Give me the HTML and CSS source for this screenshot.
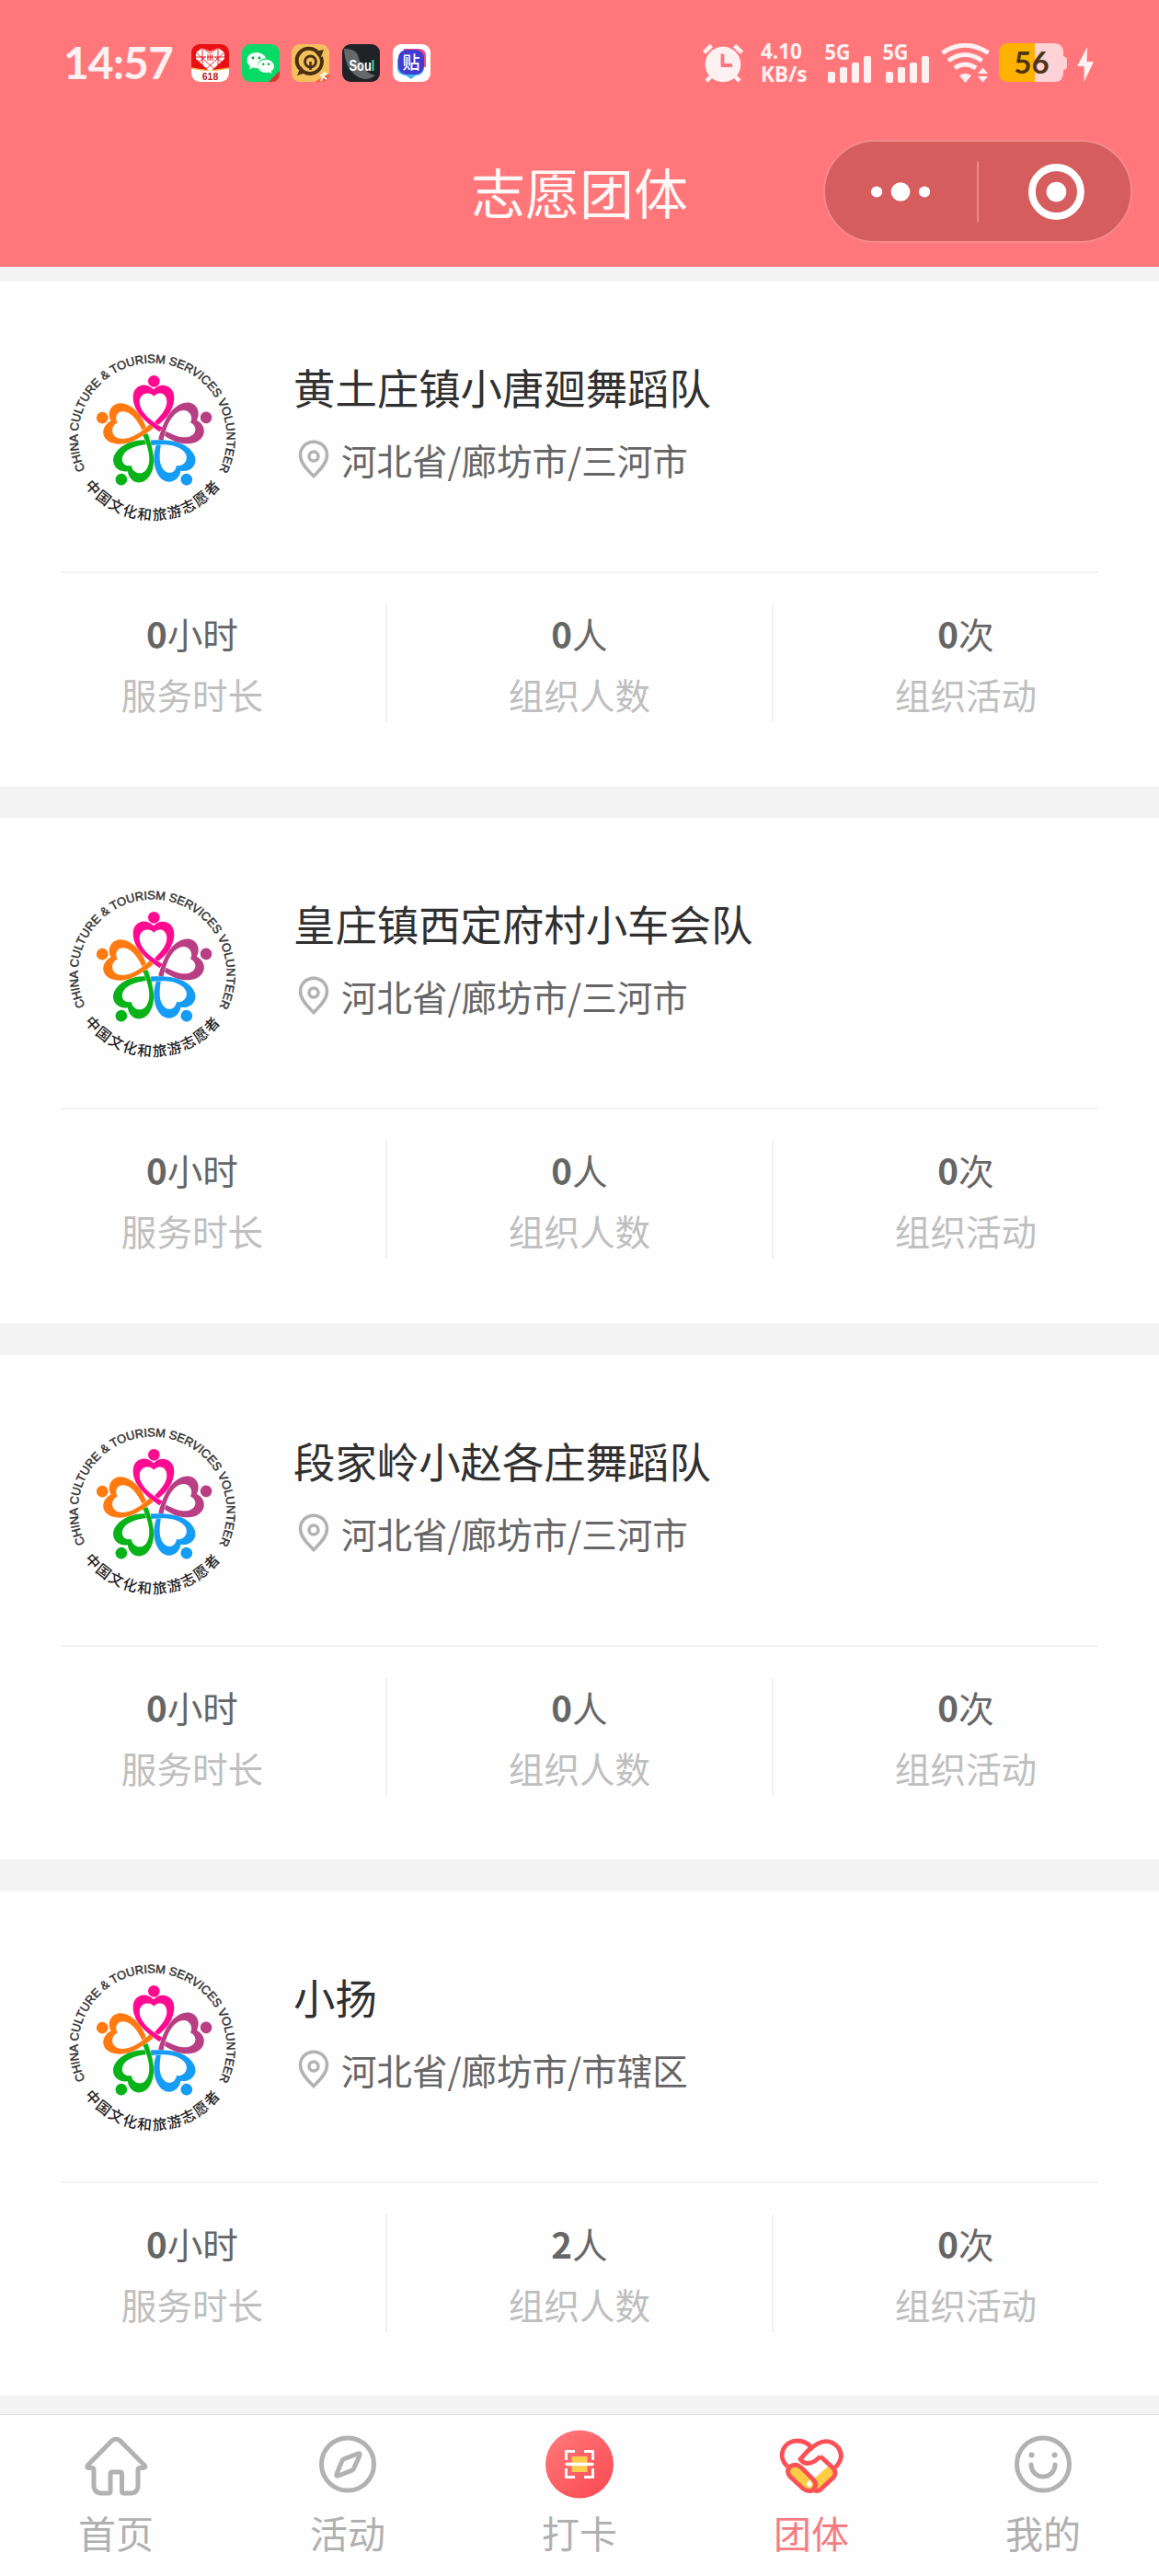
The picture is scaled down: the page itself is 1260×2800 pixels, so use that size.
FILE: index.html
```html
<!DOCTYPE html>
<html lang="zh-CN">
<head>
<meta charset="utf-8">
<title>志愿团体</title>
<link rel="stylesheet" href="styles.css">
</head>
<body>
<svg class="defs" width="0" height="0">
  <defs>
    <path id="arc-top" d="M128 452A243 243 0 1 1 566 452"/>
    <path id="arc-bottom" d="M125 503A277 277 0 0 0 571 503"/>
    <path id="petal" d="M371 328C330 300 284 265 284 215C284 176 325 163 351 190C377 163 418 178 418 217C418 252 395 285 366 305L354 296C380 270 394 250 394 230C394 201 367 194 352 212C336 194 305 203 305 230C305 262 340 292 380 314Z"/>
    <symbol id="logo" viewBox="0 0 690 690">
      <text class="ring-en"><textPath href="#arc-top" textLength="984" lengthAdjust="spacingAndGlyphs">CHINA CULTURE &amp; TOURISM SERVICES VOLUNTEER</textPath></text>
      <text class="ring-cn"><textPath href="#arc-bottom" textLength="514" lengthAdjust="spacing">中国文化和旅游志愿者</textPath></text>
      <g fill="#ff0b91"><use href="#petal"/><circle cx="352" cy="163" r="19"/></g>
      <g fill="#b83f83" transform="rotate(72 352 337)"><use href="#petal"/><circle cx="352" cy="158" r="19"/></g>
      <g fill="#159df5" transform="rotate(144 352 337)"><use href="#petal"/><circle cx="352" cy="156" r="19"/></g>
      <g fill="#08b318" transform="rotate(216 352 337)"><use href="#petal"/><circle cx="352" cy="156" r="19"/></g>
      <g fill="#ff7a10" transform="rotate(288 352 337)"><use href="#petal"/><circle cx="352" cy="160" r="19"/></g>
    </symbol>
    <symbol id="pin" viewBox="0 0 34 42">
      <path d="M17 39.500C13 35 2.500 27 2.500 16.500C2.500 8.500 9 2.200 17 2.200S31.500 8.500 31.500 16.500C31.500 27 21 35 17 39.500Z"/><circle cx="17" cy="18" r="5"/>
    </symbol>
  </defs>
</svg>

<header class="header">
  <div class="status">
    <span class="time">14:57</span>
    <div class="apps">
      <svg viewBox="0 0 41 41"><clipPath id="rc"><rect width="41" height="41" rx="9"/></clipPath><g clip-path="url(#rc)"><path fill="#e90f12" d="M0 0h41v41H0z"/><path fill="#fff" d="M0 26Q20 31 41 26V41H0z"/><path stroke="#ffb64a" stroke-width="1.500" fill="none" d="M0 26Q20 31 41 26"/></g><path fill="#fff" d="M20.500 30L5 16V9L12 4L20.500 8L29 4L36 9V16Z"/><g stroke="#e90f12" stroke-width=".9" fill="none"><path d="M5 9L26 28M12 4L34 20M36 9L15 28M29 4L7 20M12 4V24M29 4V24M5 14H15M26 14H36"/></g><path fill="#fff" d="M16 10h9v9h-9z"/><path stroke="#e90f12" d="M18 11v7M20.500 11v7M23 11v7M17 14h7"/><text x="20.500" y="39" class="t618">618</text></svg>
      <svg viewBox="0 0 41 41"><rect width="41" height="41" rx="9" fill="#09d967"/><path fill="#d7362e" d="M41 29V32Q41 41 32 41H29Z"/><path fill="#f5fff8" d="M15.500 9C9.500 9 5.500 13 5.500 17.500C5.500 20.500 7 22.500 9 24L8 27.500L12 25.500Q15 26.500 18 26C16 20 20 15.500 26 15.500C25 11.500 20.500 9 15.500 9Z"/><path fill="#f5fff8" d="M26 16.800C21 16.800 17.500 20 17.500 24S21 31 26 31Q28 31 29.500 30.500L32.500 32L31.800 29.500C34 28 35 26.300 35 24C35 20 31 16.800 26 16.800Z"/><g fill="#149a52"><circle cx="12" cy="15" r="1.400"/><circle cx="19" cy="15" r="1.400"/><circle cx="23.300" cy="21.800" r="1.200"/><circle cx="29" cy="21.800" r="1.200"/></g></svg>
      <svg viewBox="0 0 41 41"><rect width="41" height="41" rx="9" fill="#f3c05d"/><path fill="#ee6043" d="M41 32Q41 41 32 41H25Z"/><path fill="none" stroke="#4a3010" stroke-width="4" d="M9.500 27A13 13 0 0 1 28 8.500M32 14A13 13 0 0 1 13 30"/><path fill="#4a3010" d="M25 8L35 6L31 16ZM16 31L6 34L10 24Z"/><circle cx="20.500" cy="19" r="6" fill="none" stroke="#4a3010" stroke-width="2.800"/><path stroke="#4a3010" stroke-width="2.500" d="M20.500 19V28"/><path stroke="#fff" stroke-width="1.800" fill="none" d="M32 40L36 30M31 34L39 32M34 35L38 38"/></svg>
      <svg viewBox="0 0 41 41"><rect width="41" height="41" rx="9" fill="#202325"/><path fill="#65686a" d="M2 5Q16 4 18 15Q21 30 36 34Q25 42 15 34Q3 26 2 5Z"/><g transform="translate(7.500 28.500) scale(.76 1)"><text class="soul">Sou<tspan fill="#20e6b0">l</tspan></text></g></svg>
      <svg viewBox="0 0 41 41"><rect width="41" height="41" rx="9" fill="#fff"/><path fill="#ed487f" d="M12 5H28Q36 5 36 13V25H30V8H12Z"/><path fill="#39b9f2" d="M5 15V27Q6 33 14 34L20 38L25 34Q33 34 34 26L12 26Z"/><rect x="6" y="6" width="28" height="27" rx="9" fill="#423bd0"/><text x="20" y="27" class="tie">贴</text></svg>
    </div>
    <svg class="alarm" viewBox="0 0 44 43"><g fill="none" stroke="#fff1f1" stroke-width="4.500"><path d="M1.500 10L9.500 2.500M34.500 2.500L42.500 10M9 36L4 41M35 36L40 41"/></g><circle cx="22" cy="23" r="19.300" fill="#fff1f1"/><path fill="none" stroke="#ff777b" stroke-width="3.800" d="M21.500 11.500V24H32"/></svg>
    <div class="speed"><span>4.10</span><span>KB/s</span></div>
    <svg class="sig" viewBox="0 0 50 43"><text x="-.5" y="17.500" textLength="28" lengthAdjust="spacingAndGlyphs">5G</text><g fill="#fff1f1"><rect x="3" y="31" width="8" height="12" rx="2"/><rect x="16" y="26" width="8" height="17" rx="2"/><rect x="29" y="21" width="8" height="22" rx="2"/><rect x="42" y="14" width="8" height="29" rx="2"/></g></svg>
    <svg class="sig sig2" viewBox="0 0 50 43"><text x="-.5" y="17.500" textLength="28" lengthAdjust="spacingAndGlyphs">5G</text><g fill="#fff1f1"><rect x="3" y="31" width="8" height="12" rx="2"/><rect x="16" y="26" width="8" height="17" rx="2"/><rect x="29" y="21" width="8" height="22" rx="2"/><rect x="42" y="14" width="8" height="29" rx="2"/></g></svg>
    <svg class="wifi" viewBox="0 0 54 43"><g fill="none" stroke="#fff1f1" stroke-width="5"><path d="M1.500 10.500Q26 -6 51.500 10.500M8 19Q26 6 44.500 19M15 27Q26 19 38 27"/></g><path fill="#fff1f1" d="M20 35Q26 31 33 35L26.500 43ZM40 33L45.500 26.500L51 33ZM40 36H51L45.500 42.500Z"/></svg>
    <svg class="battery" viewBox="0 0 74 42"><path fill="#ffd2d5" d="M39 0H60Q70 0 70 10V14Q74 15 74 18V25Q74 28 70 29V32Q70 42 60 42H39Z"/><path fill="#ffb300" d="M11 0H39V42H11Q0 42 0 31V11Q0 0 11 0Z"/><text x="35.500" y="33">56</text></svg>
    <svg class="bolt" viewBox="0 0 18 38"><path fill="#fff1f1" d="M11 0L0 21H7.500V38L18 16H10.500Z"/></svg>
  </div>
  <div class="navbar">
    <h1>志愿团体</h1>
    <div class="capsule">
      <svg viewBox="0 0 334 110"><g fill="#fff"><circle cx="55" cy="55.500" r="6.200"/><circle cx="81.500" cy="55.500" r="10.500"/><circle cx="108" cy="55.500" r="6.200"/><circle cx="254" cy="55.500" r="11"/></g><path stroke="#e98b8c" stroke-width="2" d="M167 22V89"/><circle cx="254" cy="55.500" r="27" fill="none" stroke="#fff" stroke-width="8"/></svg>
    </div>
  </div>
</header>

<main class="list">
  <article class="card">
    <div class="head"><svg class="logo"><use href="#logo"/></svg><div class="info"><h2>黄土庄镇小唐廻舞蹈队</h2><p><svg class="pin"><use href="#pin"/></svg>河北省/廊坊市/三河市</p></div></div>
    <div class="stats"><div><p><b>0</b>小时</p><span>服务时长</span></div><div><p><b>0</b>人</p><span>组织人数</span></div><div><p><b>0</b>次</p><span>组织活动</span></div></div>
  </article>
  <article class="card">
    <div class="head"><svg class="logo"><use href="#logo"/></svg><div class="info"><h2>皇庄镇西定府村小车会队</h2><p><svg class="pin"><use href="#pin"/></svg>河北省/廊坊市/三河市</p></div></div>
    <div class="stats"><div><p><b>0</b>小时</p><span>服务时长</span></div><div><p><b>0</b>人</p><span>组织人数</span></div><div><p><b>0</b>次</p><span>组织活动</span></div></div>
  </article>
  <article class="card">
    <div class="head"><svg class="logo"><use href="#logo"/></svg><div class="info"><h2>段家岭小赵各庄舞蹈队</h2><p><svg class="pin"><use href="#pin"/></svg>河北省/廊坊市/三河市</p></div></div>
    <div class="stats"><div><p><b>0</b>小时</p><span>服务时长</span></div><div><p><b>0</b>人</p><span>组织人数</span></div><div><p><b>0</b>次</p><span>组织活动</span></div></div>
  </article>
  <article class="card">
    <div class="head"><svg class="logo"><use href="#logo"/></svg><div class="info"><h2>小扬</h2><p><svg class="pin"><use href="#pin"/></svg>河北省/廊坊市/市辖区</p></div></div>
    <div class="stats"><div><p><b>0</b>小时</p><span>服务时长</span></div><div><p><b>2</b>人</p><span>组织人数</span></div><div><p><b>0</b>次</p><span>组织活动</span></div></div>
  </article>
</main>

<nav class="tabs">
  <a><svg viewBox="0 0 80 80"><path d="M35.500 15Q40 11.500 44.500 15L71 41.500Q73 44.500 69.500 44.500H66Q64 44.500 64 47V65Q63 71.500 57 72H49Q46.500 72 46.500 69.500V51Q46.500 49 44 49H36Q34 49 34 51V69.500Q34 72 31.500 72H23Q17 71 16 65V47Q16 44.500 14 44.500H10.500Q7.500 44 9.500 41.500Z"/></svg>首页</a>
  <a><svg viewBox="0 0 80 80"><circle cx="40" cy="40.500" r="28.500"/><path d="M35.500 35L51 29Q54 28 53 31L46.500 45.500Q46 46.500 45 47L30 53Q27 54 28 51L34 36.500Q34.500 35.500 35.500 35Z"/></svg>活动</a>
  <a><svg viewBox="0 0 80 80"><defs><linearGradient id="scan" x1="0" y1="0" x2=".8" y2="1"><stop stop-color="#ff7b7b"/><stop offset="1" stop-color="#fb4c54"/></linearGradient></defs><circle cx="40" cy="40.500" r="37" fill="url(#scan)" stroke="none"/><path fill="#ffcd4c" stroke="none" d="M31.500 32h17v17h-17z"/><path stroke="#fff" stroke-width="3" d="M25.500 36V26.500H35M45 26.500H54.500V36M54.500 45V54.500H45M35 54.500H25.500V45"/><path stroke="#fff" stroke-width="3.500" stroke-linecap="round" d="M26 40.500H54"/></svg>打卡</a>
  <a class="active"><svg viewBox="0 0 80 80"><path fill="#ffcc43" stroke="none" d="M42 57L58 43L66 48V54L49 69L43 68Z"/><g class="hands"><path d="M14 43C2 31 10 15 25 15Q34 15 40 22"/><path d="M38 25C51 12 62 14 69 22Q77 33 66 44M50 32L64 45Q68 50 64 55L50 68Q46 71 42 68M40 22L28 35Q34 43 44 37L50 32"/><path fill="#ffcc43" d="M17 43Q23 39 29 44L42 57Q48 63 41 69Q36 71 31 67L17 54Q12 48 17 43Z"/></g><path fill="#fff" stroke="none" d="M35 62Q38 55 40 60Q42 66 36 65Z"/></svg>团体</a>
  <a><svg viewBox="0 0 80 80"><circle cx="40" cy="40.500" r="28.500"/><path stroke-linecap="round" d="M27 41A13 13 0 0 0 53 41"/><g fill="#b2b2b2" stroke="none"><circle cx="27.500" cy="30.500" r="3"/><circle cx="52.500" cy="30.500" r="3"/></g></svg>我的</a>
</nav>
</body>
</html>
```
FILE: styles.css
```css
* { box-sizing: border-box; }
body {
  margin: 0;
  width: 1260px;
  height: 2800px;
  overflow: hidden;
  display: flex;
  flex-direction: column;
  background: #f4f4f4;
  font-family: "Noto Sans CJK SC", sans-serif;
}
h1, h2, p { margin: 0; font-weight: 400; }
svg { display: block; flex: none; }
.defs { position: absolute; }

.header { height: 290px; background: #ff777b; flex: none; }
.status { height: 136px; display: flex; align-items: center; padding-left: 69px; color: #fff1f1; }
.time { width: 139px; font: 700 48px/60px Lato, sans-serif; letter-spacing: -1px; }
.apps { display: flex; gap: 13.700px; width: 260px; margin-right: 296px; }
.apps svg { width: 41px; height: 41px; }
.t618 { font: 700 10.500px "Liberation Sans", sans-serif; text-anchor: middle; fill: #b9231f; }
.soul { font: 700 17px "Liberation Sans", sans-serif; fill: #fff; }
.tie { font: 500 19px "Noto Sans CJK SC", sans-serif; text-anchor: middle; fill: #fff; }
.alarm { width: 44px; height: 43px; }
.speed { width: 70px; margin-left: 19px; display: flex; flex-direction: column; font: 700 22.500px/25px "Noto Sans", sans-serif; }
.sig { width: 50px; height: 43px; overflow: visible; }
.sig2 { margin-left: 13px; }
.sig text { font: 700 23px "Noto Sans", sans-serif; fill: #fff1f1; }
.wifi { width: 54px; height: 43px; margin-left: 13px; }
.battery { width: 74px; height: 42px; margin-left: 9px; }
.battery text { font: 700 33px Lato, sans-serif; text-anchor: middle; fill: #4b3514; }
.bolt { width: 18px; height: 38px; margin: 4px 0 0 11px; }

.navbar { height: 144px; display: grid; grid-template-columns: 1fr auto 1fr; align-items: center; padding-right: 29px; padding-left: 29px; }
.navbar h1 { grid-column: 2; font-size: 59px; line-height: 80px; color: #fff8f6; }
.capsule { justify-self: end; width: 336px; height: 112px; border: 2px solid #f28a8b; border-radius: 56px; background: #d65d5e; }
.capsule svg { width: 332px; height: 108px; }

.list { flex: none; height: 2334px; padding-top: 16px; display: flex; flex-direction: column; gap: 34.700px; overflow: hidden; }
.card { height: 548.600px; background: #fefefe; flex: none; }
.head { height: 317px; margin: 0 66px; padding-top: 54px; border-bottom: 2px solid #f3f3f3; display: flex; }
.logo { width: 230px; height: 230px; margin-left: -16px; }
.ring-en { font: 400 39px "Liberation Sans", sans-serif; fill: #333; stroke: #333; stroke-width: 1.400px; }
.ring-cn { font: 500 47px "Noto Sans CJK SC", sans-serif; fill: #222; }
.info { padding: 30px 0 0 39px; }
.info h2 { font-size: 45.400px; line-height: 60px; color: #303030; }
.info p { display: flex; align-items: center; margin-top: 24px; font-size: 38.500px; line-height: 50px; color: #666; }
.pin { width: 34px; height: 42px; margin: 0 13px 0 5px; fill: none; stroke: #b2b2b2; stroke-width: 3.500; }
.stats { display: grid; grid-template-columns: repeat(3, 1fr); padding-top: 34px; margin-left: -1px; margin-right: 1px; }
.stats div { height: 128px; text-align: center; font-size: 38.600px; line-height: 71px; color: #666; }
.stats div + div { border-left: 2px solid #f3f3f3; }
.stats p { line-height: 62px; }
.stats b { font-weight: 700; }
.stats span { display: block; color: #bfbfbf; }

.tabs { flex: none; height: 176px; border-top: 1.500px solid #e2e2e2; background: #fefefe; display: grid; grid-template-columns: repeat(5, 1fr); }
.tabs a { display: flex; flex-direction: column; align-items: center; padding-top: 13px; font-size: 41px; line-height: 60px; color: #b0b0b0; }
.tabs svg { width: 80px; height: 80px; margin-bottom: 4px; fill: none; stroke: #b2b2b2; stroke-width: 5; }
.tabs .active { color: #f77c82; }
.tabs .hands { stroke: #fb5055; stroke-width: 4.800; stroke-linejoin: round; }
```
